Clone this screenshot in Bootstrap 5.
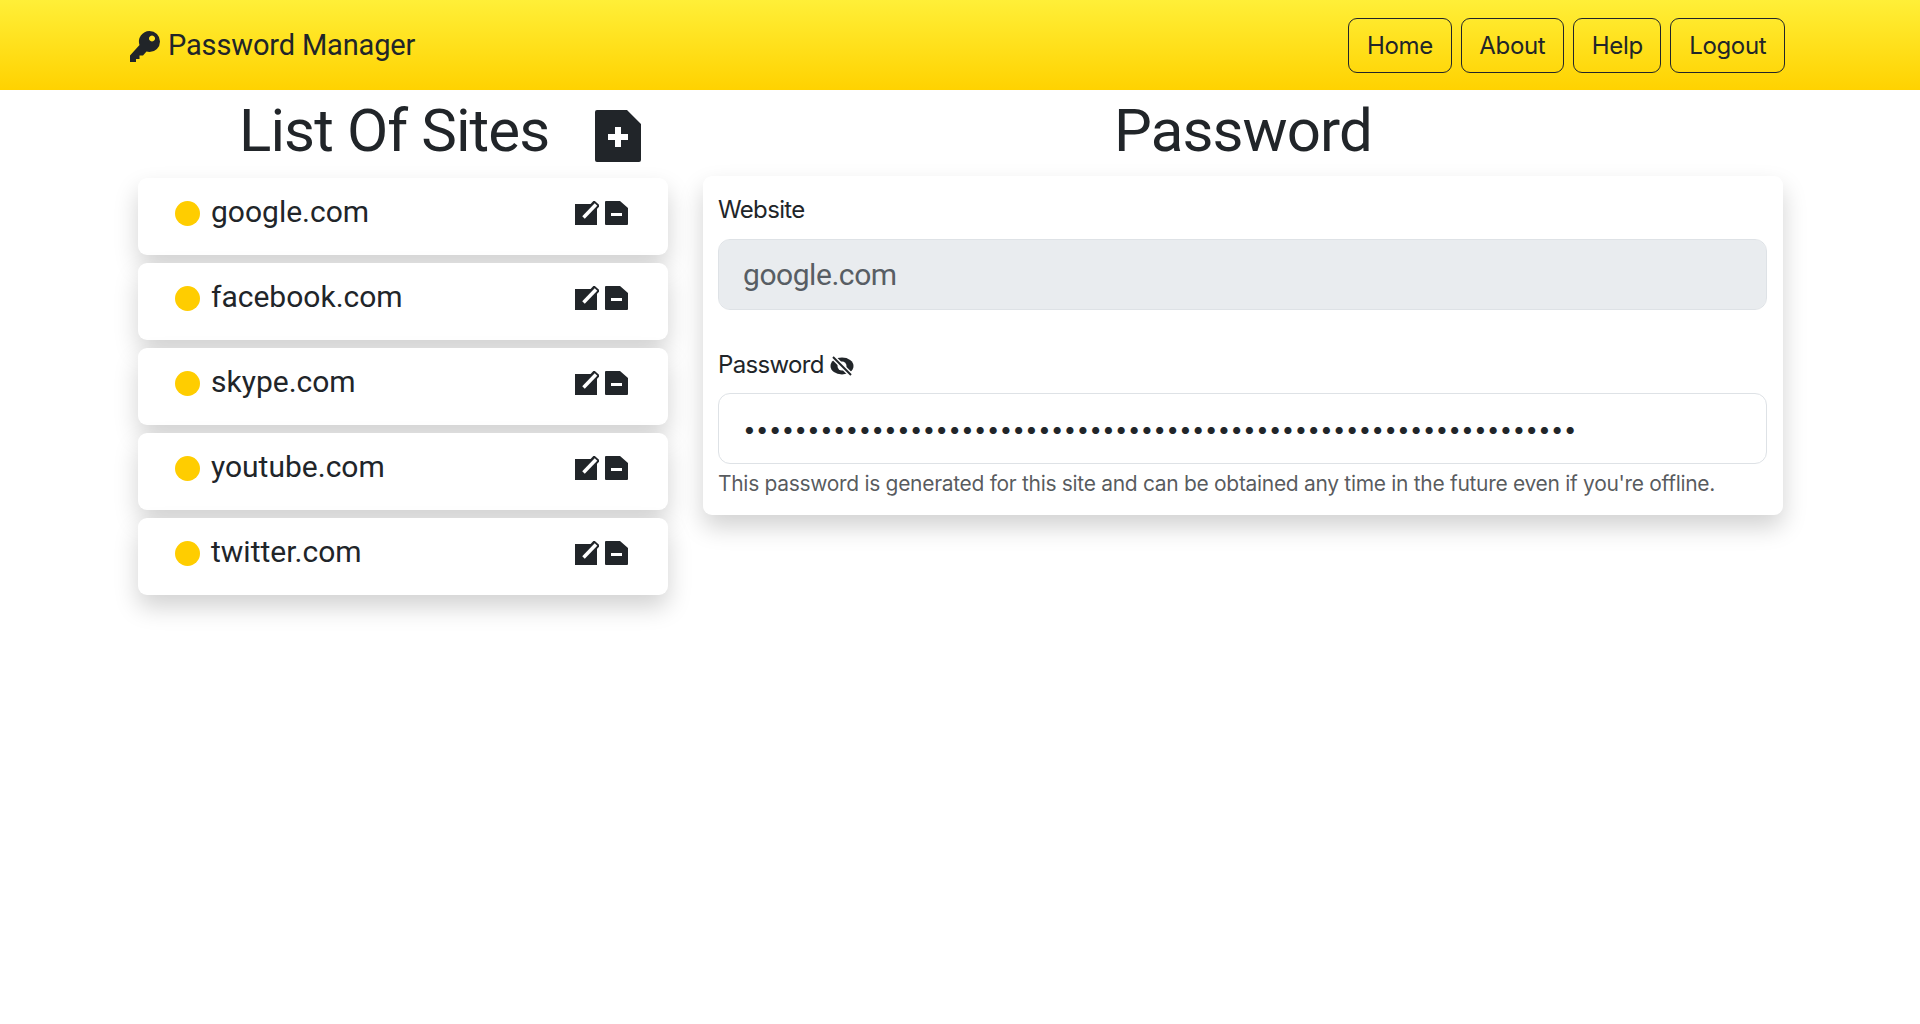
<!DOCTYPE html>
<html lang="en">
<head>
    <meta charset="UTF-8">
    <title>Password Manager</title>
    <link href="https://cdn.jsdelivr.net/npm/bootstrap@5.3.0/dist/css/bootstrap.min.css" rel="stylesheet">
    <style>
        html { font-size: 24px; }
        body { font-family: "Inter", "Liberation Sans", sans-serif; color: #212529; }
        .top-bar { height: 90px; background: linear-gradient(#ffef38, #ffd200); padding: 0; }
        .page-wrap { width: 1680px; margin: 0 auto; }
        .body-wrap { padding-bottom: 60px; }
        .top-inner { padding: 0 15px 0 10px; }
        .brand-name { font-family: "Roboto", sans-serif; font-size: 29px; letter-spacing: -.15px; color: #212529; gap: 8px; padding-top: 2px; }
        .brand-name svg { width: 30px; height: 31px; }
        .top-btn { height: 55px; color: #212529; border-color: #212529; padding-left: 17.75px; padding-right: 17.75px; letter-spacing: -.35px; }
        .top-links { gap: 9px; }
        .side-col { width: 530px; margin-left: 18px; }
        .main-col { width: 1080px; margin-left: 35px; }
        .head-line { font-family: "Roboto", sans-serif; font-weight: 400; margin: 0; font-size: 60px; line-height: 82px; letter-spacing: -.9px; white-space: nowrap; }
        .side-head { height: 88px; }
        .main-head { height: 86px; }
        .add-icon { width: 46px; height: 52px; margin-left: 46px; margin-top: 20px; flex-shrink: 0; }
        .side-title { margin-left: 101px; }
        .site-card { height: 77px; padding: 16px 39px 12px 37px; font-family: "Roboto", sans-serif; font-size: 30px; line-height: 36px; border-radius: 9px; margin-bottom: 8px; }
        .site-dot { width: 25px; height: 25px; border-radius: 50%; background: #ffcd00; margin-right: 11px; margin-top: 7px; }
        .row-icon { width: 24px; height: 24px; margin-top: 7px; }
        .pass-card { padding: 16px 16px 15px 15px; border-radius: 9px; border: 0; }
        .lift-shadow { box-shadow: 0 12px 24px rgba(0, 0, 0, .18); }
        .pass-label { letter-spacing: -.65px; margin-bottom: 11px; }
        .pw-label { margin-bottom: 10px; }
        .site-input { font-family: "Roboto", sans-serif; letter-spacing: -.45px; }
        .site-input:disabled { color: #585e64; }
        .pw-input { font-size: 22.8px; height: 71px; }
        .gap-row { margin-bottom: 37px; }
        .eye-icon { width: 24px; height: 24px; vertical-align: -5px; }
        .help-line { margin-top: 4px; letter-spacing: -.31px; }
    </style>
</head>
<body>
    <nav class="top-bar d-flex align-items-center">
        <div class="page-wrap top-inner d-flex justify-content-between align-items-center">
            <a class="brand-name d-flex align-items-center text-decoration-none" href="#">
                <svg viewBox="0 0 30 31"><path fill="#212529" fill-rule="evenodd" d="M19.500 0a10.500 10.500 0 0 1 0 21 10.500 10.500 0 0 1-3-.5L13 24.500h-3.500V28H6v3H0v-6.500L9.500 14A10.500 10.500 0 0 1 19.500 0zm2.500 4.500a3 3 0 1 0 .01 0z"/></svg>
                Password Manager
            </a>
            <div class="d-flex top-links">
                <a class="btn top-btn" href="#">Home</a>
                <a class="btn top-btn" href="#">About</a>
                <a class="btn top-btn" href="#">Help</a>
                <a class="btn top-btn" href="#">Logout</a>
            </div>
        </div>
    </nav>
    <div class="page-wrap body-wrap d-flex">
        <div class="side-col">
            <div class="d-flex side-head">
                <h1 class="head-line side-title">List Of Sites</h1>
                <svg class="add-icon" viewBox="0 0 46 52"><path fill="#212529" fill-rule="evenodd" d="M2 0h30l14 14v36a2 2 0 0 1-2 2H2a2 2 0 0 1-2-2V2a2 2 0 0 1 2-2zM20 17v7h-7v6h7v7h6v-7h7v-6h-7v-7z"/></svg>
            </div>
            <div class="d-flex flex-column" id="sites"></div>
        </div>
        <div class="main-col">
            <h1 class="head-line main-head text-center">Password</h1>
            <div class="card lift-shadow pass-card">
                <div class="gap-row">
                    <label class="form-label pass-label" for="site">Website</label>
                    <input class="form-control form-control-lg site-input" id="site" type="text" value="google.com" disabled>
                </div>
                <div>
                    <label class="form-label pass-label pw-label" for="pw">Password
                        <svg class="eye-icon" viewBox="0 0 24 24"><ellipse cx="12" cy="12" rx="11.500" ry="8.500" fill="#212529"/><circle cx="12" cy="12" r="4.500" fill="#fff"/><path d="M3 3l18 18" stroke="#fff" stroke-width="5"/><path d="M3 3l18 18" stroke="#212529" stroke-width="2"/></svg>
                    </label>
                    <input class="form-control form-control-lg pw-input" id="pw" type="password" value="aaaaaaaaaaaaaaaaaaaaaaaaaaaaaaaaaaaaaaaaaaaaaaaaaaaaaaaaaaaaaaaaa">
                    <div class="form-text help-line">This password is generated for this site and can be obtained any time in the future even if you're offline.</div>
                </div>
            </div>
        </div>
    </div>
    <script>
        var sites = ["google.com", "facebook.com", "skype.com", "youtube.com", "twitter.com"];
        var html = "";
        sites.forEach(function (s) {
            html += '<div class="card lift-shadow site-card flex-row border-0">' +
                '<span class="site-dot"></span><span class="flex-grow-1">' + s + '</span>' +
                '<svg class="row-icon me-1" viewBox="0 0 24 24"><path fill="#212529" d="M0 3h22v21H0z"/><path d="M8 17 22 2" stroke="#212529" stroke-width="8"/><path d="M8.500 16.500 21 3.500" stroke="#fff" stroke-width="3.500"/></svg>' +
                '<svg class="row-icon" viewBox="0 0 24 24"><path fill="#212529" fill-rule="evenodd" d="M1 0h14l8 7v16a1 1 0 0 1-1 1H1a1 1 0 0 1-1-1V1a1 1 0 0 1 1-1zM6 12v3h11v-3z"/></svg>' +
                '</div>';
        });
        document.getElementById("sites").innerHTML = html;
    </script>
    <script src="https://cdn.jsdelivr.net/npm/bootstrap@5.3.0/dist/js/bootstrap.bundle.min.js"></script>
</body>
</html>
